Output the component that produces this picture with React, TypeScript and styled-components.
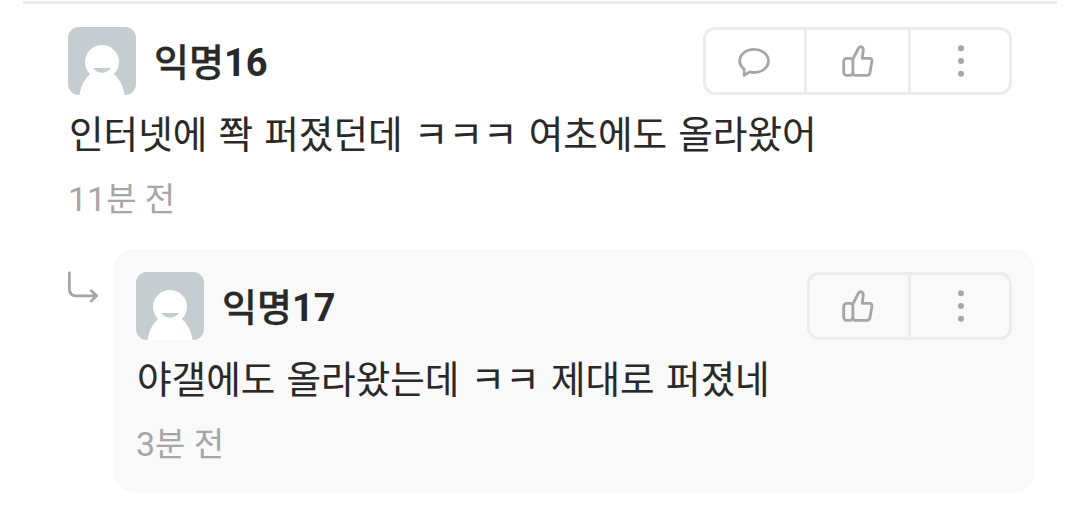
import styled, { createGlobalStyle } from 'styled-components';

const GlobalStyle = createGlobalStyle`
    * {
        box-sizing: border-box;
    }
    body {
        margin: 0;
        background: #fff;
        font-family: Roboto, 'Noto Sans CJK KR', sans-serif;
        color: #292929;
    }
`;

const Page = styled.main`
    width: 1080px;
    height: 524px;
    padding: 1px 23px 0;
    overflow: hidden;
`;

const CommentList = styled.section`
    border-top: 3px solid #ececec;
    padding: 23px 22px 0 45px;
`;

const Comment = styled.article`
    padding-right: 23px;
`;

const Header = styled.header`
    display: flex;
    align-items: center;
    height: 68px;
`;

const AvatarIcon = styled.svg`
    width: 68px;
    height: 68px;
    border-radius: 11px;
    background: #c5cdd0;
`;

const Name = styled.h2`
    margin: 4px 0 0 18px;
    font-size: 38px;
    line-height: 44px;
    font-weight: 700;
`;

const NameLabel = styled.span`
    font-weight: 500;
    -webkit-text-stroke: 0.3px currentColor;
`;

const Actions = styled.div`
    display: flex;
    height: 68px;
    margin-left: auto;
    border: 3px solid #ececec;
    border-radius: 12px;
`;

const Action = styled.button`
    display: flex;
    align-items: center;
    justify-content: center;
    width: 98px;
    padding: 0 3px 1px 0;
    border: 0;
    background: transparent;
    color: #a6a6a6;
    & + & {
        width: 104px;
        border-left: 3px solid #ececec;
        padding-right: 0;
    }
    & + &:last-child {
        width: 101px;
        padding: 0 0 1px 2px;
    }
`;

const Icon = styled.svg`
    width: 34px;
    height: 34px;
    fill: none;
    stroke: currentColor;
    stroke-width: 2.8;
    stroke-linecap: round;
    stroke-linejoin: round;
`;

const Body = styled.p`
    margin: 12px 0 0 1px;
    font-size: 37.6px;
    line-height: 56px;
    word-spacing: 1.9px;
    white-space: nowrap;
    -webkit-text-stroke: 0.1px currentColor;
`;

const Time = styled.p`
    margin: 14px 0 0;
    font-size: 34px;
    line-height: 45px;
    color: #a6a6a6;
`;

const TimeUnit = styled.span`
    font-size: 33px;
`;

const Thread = styled.div`
    display: flex;
    align-items: flex-start;
    margin-top: 27px;
`;

const ReplyArrow = styled(Icon)`
    flex: none;
    width: 45px;
    height: 60px;
`;

const ReplyCard = styled.article`
    flex: 1;
    height: 244px;
    padding: 23px;
    border-radius: 22px;
    background: #f9f9f9;
`;

function Avatar() {
    return (
        <AvatarIcon viewBox="0 0 68 68">
            <path d="M11.5 68C13 58 17 51 23 46.5H45C51 51 55 58 56.5 68Z" fill="#fff" />
            <circle cx="34" cy="35" r="17" fill="#fff" />
            <path d="M25 41H43C38.5 47.3 29.5 47.3 25 41Z" fill="#c5cdd0" />
        </AvatarIcon>
    );
}

function LikeIcon() {
    return (
        <Icon viewBox="0 0 34 34">
            <rect x="2.7" y="14.3" width="9.2" height="17" rx="3" />
            <path d="M11.9 15L17.3 4.5C18.1 2.9 19.3 2.4 20.4 2.8C22.2 3.4 22.5 5 22.2 7L21.2 14.3H28.5C30.6 14.3 31.2 15.6 30.9 17.4L29 28.5C28.7 30.4 27.9 31.3 26.1 31.3H14.3C12.8 31.3 11.9 30.5 11.9 28.8" />
        </Icon>
    );
}

function CommentIcon() {
    return (
        <Icon viewBox="0 0 34 34">
            <path d="M7.2 25.1C4.2 23 2.7 20.3 2.7 17C2.7 10.5 9 5.4 17 5.4C25.1 5.4 31.4 10.5 31.4 17C31.4 23.6 25.1 28.5 17 28.5C15.5 28.5 14.1 28.3 12.7 27.9L7.2 31.4Z" />
        </Icon>
    );
}

function MoreIcon() {
    return (
        <Icon viewBox="0 0 34 34">
            <g fill="currentColor" stroke="none">
                <circle cx="17" cy="4.3" r="3" />
                <circle cx="17" cy="17" r="3" />
                <circle cx="17" cy="29.7" r="3" />
            </g>
        </Icon>
    );
}

interface CommentContentProps {
    number: number;
    text: string;
    minutes: number;
    canReply?: boolean;
}

function CommentContent({ number, text, minutes, canReply }: CommentContentProps) {
    return (
        <>
            <Header>
                <Avatar />
                <Name><NameLabel>익명</NameLabel>{number}</Name>
                <Actions>
                    {canReply && <Action aria-label="댓글"><CommentIcon /></Action>}
                    <Action aria-label="좋아요"><LikeIcon /></Action>
                    <Action aria-label="더보기"><MoreIcon /></Action>
                </Actions>
            </Header>
            <Body>{text}</Body>
            <Time>{minutes}<TimeUnit>분 전</TimeUnit></Time>
        </>
    );
}

export default function App() {
    return (
        <Page>
            <GlobalStyle />
            <CommentList>
                <Comment>
                    <CommentContent
                        number={16}
                        text="인터넷에 쫙 퍼졌던데 ㅋㅋㅋ 여초에도 올라왔어"
                        minutes={11}
                        canReply
                    />
                </Comment>
                <Thread>
                    <ReplyArrow viewBox="0 0 45 60" color="#a6a6a6">
                        <path d="M1.4 24V40Q1.4 46.8 8.2 46.8H28.5M23.2 41.7L28.7 46.8L23.2 52" />
                    </ReplyArrow>
                    <ReplyCard>
                        <CommentContent
                            number={17}
                            text="야갤에도 올라왔는데 ㅋㅋ 제대로 퍼졌네"
                            minutes={3}
                        />
                    </ReplyCard>
                </Thread>
            </CommentList>
        </Page>
    );
}
